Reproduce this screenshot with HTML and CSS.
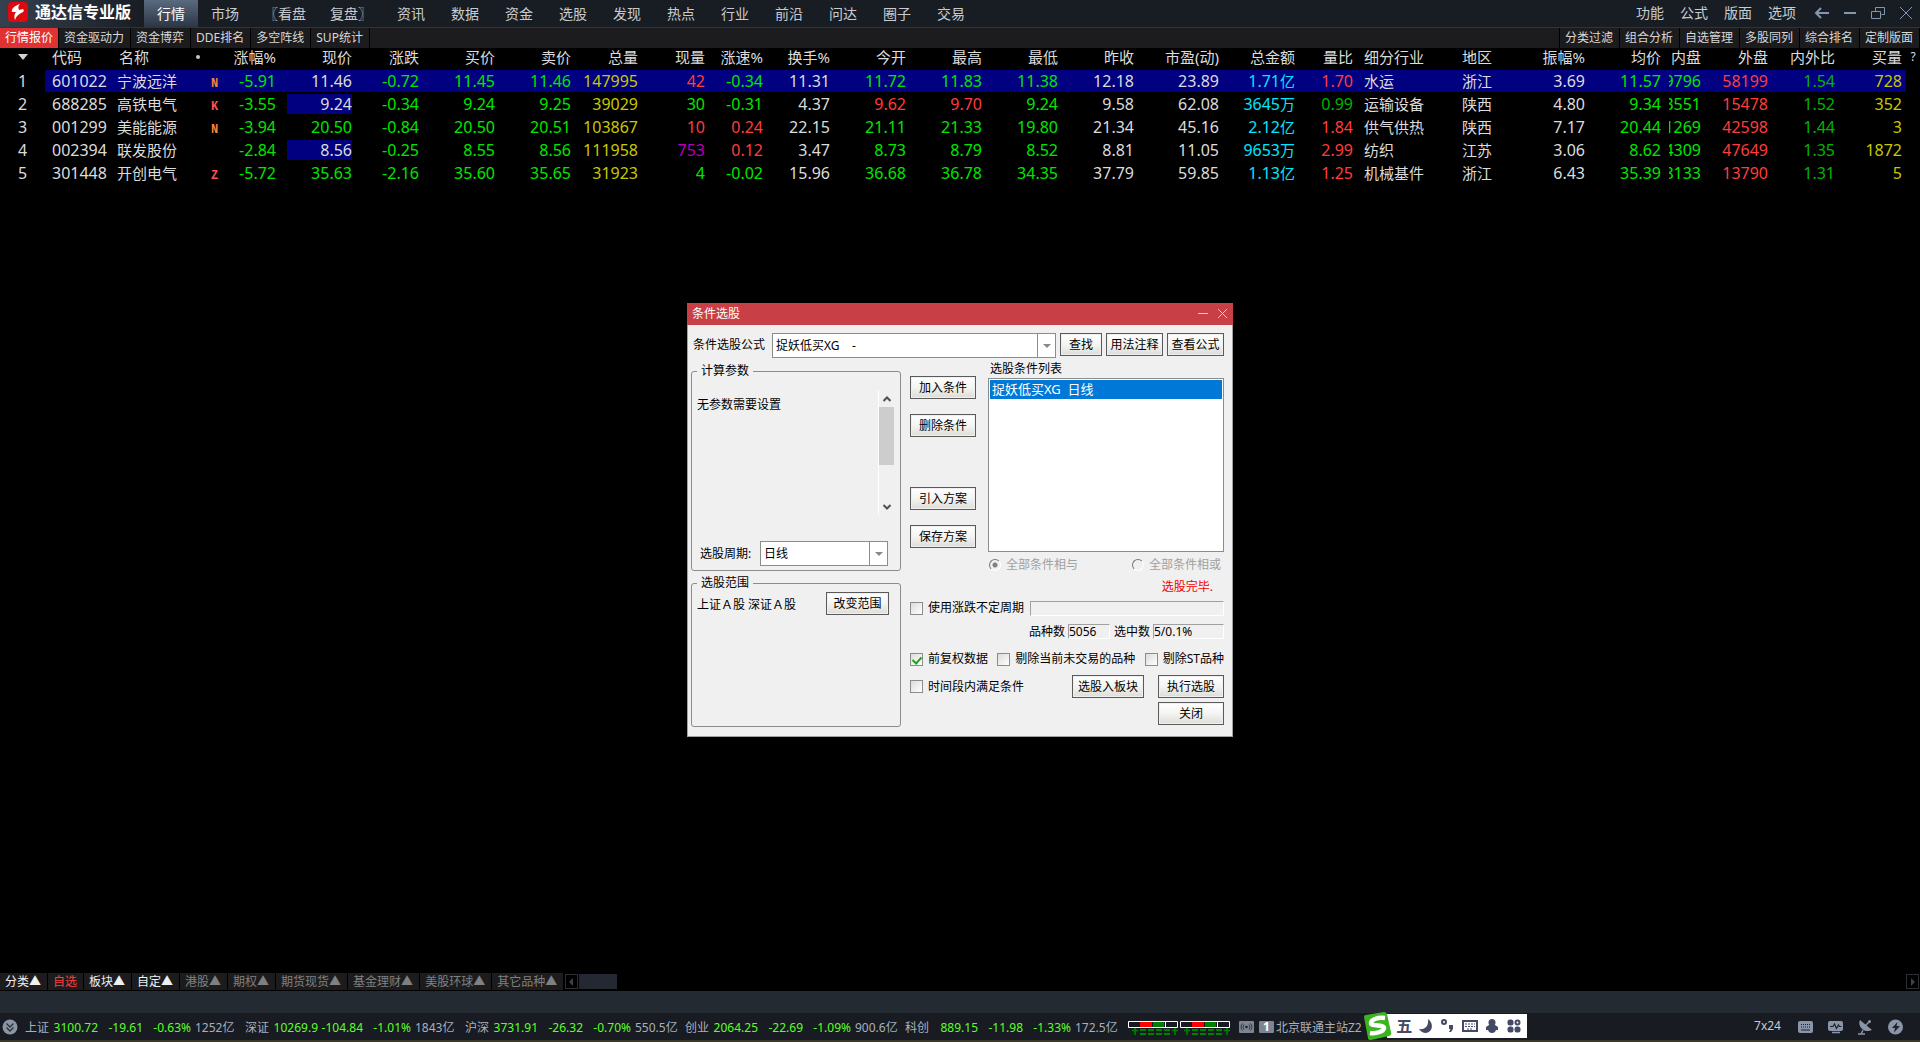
FILE: index.html
```html
<!DOCTYPE html>
<html lang="zh-CN">
<head>
  <meta charset="UTF-8">
  <meta name="viewport" content="width=device-width, initial-scale=1.0">
  <title>通达信专业版</title>
  <link rel="stylesheet" href="styles.css">
</head>
<body>
  <!-- Top menu -->
  <header class="topbar">
    <div class="brand">
      <svg width="20" height="20" viewBox="0 0 20 20">
        <rect width="20" height="20" rx="4" fill="#dc0a0f"/>
        <path d="M12 2 C6 4 3 7 4 10 L8 10 C6 12 6 15 7 18 C8 14 11 12 15 10 C16 9 16 8 15 7 L11 8 C10 6 10 4 12 2Z" fill="#fff"/>
      </svg>
      <span>通达信专业版</span>
    </div>
    <nav class="menu">
      <a href="#" class="active">行情</a>
      <a href="#">市场</a>
      <a href="#" class="wide">〖看盘</a>
      <a href="#" class="wide">复盘〗</a>
      <a href="#">资讯</a>
      <a href="#">数据</a>
      <a href="#">资金</a>
      <a href="#">选股</a>
      <a href="#">发现</a>
      <a href="#">热点</a>
      <a href="#">行业</a>
      <a href="#">前沿</a>
      <a href="#">问达</a>
      <a href="#">圈子</a>
      <a href="#">交易</a>
    </nav>
    <nav class="menu tools">
      <a href="#">功能</a>
      <a href="#">公式</a>
      <a href="#">版面</a>
      <a href="#">选项</a>
    </nav>
    <div class="window-buttons">
      <button type="button" aria-label="返回"><svg width="16" height="14" viewBox="0 0 16 14"><path d="M15 7H2M7 2L2 7l5 5"/></svg></button>
      <button type="button" aria-label="最小化"><svg width="16" height="14" viewBox="0 0 16 14"><path d="M2 7h12"/></svg></button>
      <button type="button" aria-label="还原"><svg width="16" height="14" viewBox="0 0 16 14"><path class="thin" d="M5.5 5V1.5h9v7h-3M1.5 5.5h9v7h-9z"/></svg></button>
      <button type="button" aria-label="关闭窗口"><svg width="16" height="14" viewBox="0 0 16 14"><path class="thin" d="M2 1l12 12M14 1L2 13"/></svg></button>
    </div>
  </header>

  <nav class="tabs">
    <a href="#" class="active">行情报价</a>
    <a href="#">资金驱动力</a>
    <a href="#">资金博弈</a>
    <a href="#">DDE排名</a>
    <a href="#">多空阵线</a>
    <a href="#">SUP统计</a>
    <span class="spacer"></span>
    <a href="#">分类过滤</a>
    <a href="#">组合分析</a>
    <a href="#">自选管理</a>
    <a href="#">多股同列</a>
    <a href="#">综合排名</a>
    <a href="#">定制版面</a>
  </nav>

  <!-- Quotes -->
  <main class="quotes">
    <table>
      <colgroup>
        <col width="45"><col width="69"><col width="94"><col width="14"><col width="54">
        <col width="76"><col width="67"><col width="76"><col width="76"><col width="67">
        <col width="67"><col width="58"><col width="67"><col width="76"><col width="76">
        <col width="76"><col width="76"><col width="85"><col width="76"><col width="58">
        <col width="102"><col width="63"><col width="67"><col width="76"><col width="40">
        <col width="67"><col width="67"><col width="67"><col width="4"><col width="14">
      </colgroup>
      <thead>
        <tr>
          <th class="idx"><svg width="10" height="6" viewBox="0 0 10 6"><path d="M0 0h10L5 6z" fill="#d2d2d2"/></svg></th>
          <th class="code">代码</th><th class="name"><div class="name-head">名称<i></i></div></th><th></th><th>涨幅%</th>
          <th>现价</th><th>涨跌</th><th>买价</th><th>卖价</th><th>总量</th>
          <th>现量</th><th>涨速%</th><th>换手%</th><th>今开</th><th>最高</th>
          <th>最低</th><th>昨收</th><th>市盈(动)</th><th>总金额</th><th>量比</th>
          <th class="trade">细分行业</th><th class="area">地区</th><th>振幅%</th><th>均价</th><th>内盘</th>
          <th>外盘</th><th>内外比</th><th>买量</th><th></th><th class="help">?</th>
        </tr>
      </thead>
      <tbody>
        <tr class="selected">
          <td class="idx">1</td><td class="code">601022</td><td class="name">宁波远洋</td><td class="flag orange">N</td><td class="down">-5.91</td>
          <td>11.46</td><td class="down">-0.72</td><td class="down">11.45</td><td class="down">11.46</td><td class="vol">147995</td>
          <td class="up">42</td><td class="down">-0.34</td><td>11.31</td><td class="down">11.72</td><td class="down">11.83</td>
          <td class="down">11.38</td><td>12.18</td><td>23.89</td><td class="money">1.71<small>亿</small></td><td class="up">1.70</td>
          <td class="trade">水运</td><td class="area">浙江</td><td>3.69</td><td class="down">11.57</td><td class="down"><div class="clip">9796</div></td>
          <td class="up">58199</td><td class="dim">1.54</td><td class="vol">728</td><td></td><td class="end"></td>
        </tr>
        <tr>
          <td class="idx">2</td><td class="code">688285</td><td class="name">高铁电气</td><td class="flag red">K</td><td class="down">-3.55</td>
          <td><div class="flash">9.24</div></td><td class="down">-0.34</td><td class="down">9.24</td><td class="down">9.25</td><td class="vol">39029</td>
          <td class="down">30</td><td class="down">-0.31</td><td>4.37</td><td class="up">9.62</td><td class="up">9.70</td>
          <td class="down">9.24</td><td>9.58</td><td>62.08</td><td class="money">3645<small>万</small></td><td class="dim">0.99</td>
          <td class="trade">运输设备</td><td class="area">陕西</td><td>4.80</td><td class="down">9.34</td><td class="down"><div class="clip">3551</div></td>
          <td class="up">15478</td><td class="dim">1.52</td><td class="vol">352</td><td></td><td class="end"></td>
        </tr>
        <tr>
          <td class="idx">3</td><td class="code">001299</td><td class="name">美能能源</td><td class="flag orange">N</td><td class="down">-3.94</td>
          <td class="down">20.50</td><td class="down">-0.84</td><td class="down">20.50</td><td class="down">20.51</td><td class="vol">103867</td>
          <td class="up">10</td><td class="up">0.24</td><td>22.15</td><td class="down">21.11</td><td class="down">21.33</td>
          <td class="down">19.80</td><td>21.34</td><td>45.16</td><td class="money">2.12<small>亿</small></td><td class="up">1.84</td>
          <td class="trade">供气供热</td><td class="area">陕西</td><td>7.17</td><td class="down">20.44</td><td class="down"><div class="clip">1269</div></td>
          <td class="up">42598</td><td class="dim">1.44</td><td class="vol">3</td><td></td><td class="end"></td>
        </tr>
        <tr>
          <td class="idx">4</td><td class="code">002394</td><td class="name">联发股份</td><td></td><td class="down">-2.84</td>
          <td><div class="flash">8.56</div></td><td class="down">-0.25</td><td class="down">8.55</td><td class="down">8.56</td><td class="vol">111958</td>
          <td class="big">753</td><td class="up">0.12</td><td>3.47</td><td class="down">8.73</td><td class="down">8.79</td>
          <td class="down">8.52</td><td>8.81</td><td>11.05</td><td class="money">9653<small>万</small></td><td class="up">2.99</td>
          <td class="trade">纺织</td><td class="area">江苏</td><td>3.06</td><td class="down">8.62</td><td class="down"><div class="clip">4309</div></td>
          <td class="up">47649</td><td class="dim">1.35</td><td class="vol">1872</td><td></td><td class="end"></td>
        </tr>
        <tr>
          <td class="idx">5</td><td class="code">301448</td><td class="name">开创电气</td><td class="flag red">Z</td><td class="down">-5.72</td>
          <td class="down">35.63</td><td class="down">-2.16</td><td class="down">35.60</td><td class="down">35.65</td><td class="vol">31923</td>
          <td class="down">4</td><td class="down">-0.02</td><td>15.96</td><td class="down">36.68</td><td class="down">36.78</td>
          <td class="down">34.35</td><td>37.79</td><td>59.85</td><td class="money">1.13<small>亿</small></td><td class="up">1.25</td>
          <td class="trade">机械基件</td><td class="area">浙江</td><td>6.43</td><td class="down">35.39</td><td class="down"><div class="clip">8133</div></td>
          <td class="up">13790</td><td class="dim">1.31</td><td class="vol">5</td><td></td><td class="end"></td>
        </tr>
      </tbody>
    </table>
  </main>

  <!-- Stock filter dialog -->
  <section class="dialog" role="dialog" aria-labelledby="dialog-title">
    <div class="dialog-title">
      <span id="dialog-title">条件选股</span>
      <svg width="30" height="10" viewBox="0 0 30 10"><path d="M0 4.5h10M20 0l9 9M29 0l-9 9"/></svg>
    </div>
    <div class="dialog-body">
      <div class="formula-row">
        <label for="formula">条件选股公式</label>
        <div class="combo formula">
          <select id="formula"><option>捉妖低买XG &nbsp;&nbsp; -</option></select>
        </div>
        <button type="button" class="btn find">查找</button>
        <button type="button" class="btn usage">用法注释</button>
        <button type="button" class="btn usage">查看公式</button>
      </div>

      <div class="columns">
        <div class="left">
          <fieldset>
            <legend>计算参数</legend>
            <div class="params">
              <span>无参数需要设置</span>
              <div class="scrollbar">
                <svg width="8" height="6" viewBox="0 0 8 6"><path d="M0.5 5L4 1.5L7.5 5"/></svg>
                <div class="thumb"></div>
                <svg width="8" height="6" viewBox="0 0 8 6"><path d="M0.5 1L4 4.5L7.5 1"/></svg>
              </div>
            </div>
            <div class="period">
              <label for="period">选股周期:</label>
              <div class="combo">
                <select id="period"><option>日线</option></select>
              </div>
            </div>
          </fieldset>
          <fieldset class="range">
            <legend>选股范围</legend>
            <div class="range-row">
              <span>上证Ａ股 深证Ａ股</span>
              <button type="button" class="btn">改变范围</button>
            </div>
          </fieldset>
        </div>

        <div class="right">
          <div class="pick">
            <div class="actions">
              <button type="button" class="btn">加入条件</button>
              <button type="button" class="btn">删除条件</button>
              <button type="button" class="btn scheme">引入方案</button>
              <button type="button" class="btn">保存方案</button>
            </div>
            <div class="list">
              <span id="list-label">选股条件列表</span>
              <ul role="listbox" aria-labelledby="list-label">
                <li role="option" aria-selected="true">捉妖低买XG&nbsp; 日线</li>
              </ul>
            </div>
          </div>
          <div class="radios">
            <label><input type="radio" name="logic" checked disabled>全部条件相与</label>
            <label><input type="radio" name="logic" disabled>全部条件相或</label>
          </div>
          <div class="done">选股完毕.</div>
          <div class="cycle">
            <label><input type="checkbox">使用涨跌不定周期</label>
            <div class="sunken"></div>
          </div>
          <div class="stats">
            <span>品种数</span><div class="sunken total">5056</div>
            <span>选中数</span><div class="sunken hits">5/0.1%</div>
          </div>
          <div class="checks">
            <label><input type="checkbox" checked>前复权数据</label>
            <label><input type="checkbox">剔除当前未交易的品种</label>
            <label><input type="checkbox">剔除ST品种</label>
          </div>
          <div class="run">
            <label><input type="checkbox">时间段内满足条件</label>
            <button type="button" class="btn block">选股入板块</button>
            <button type="button" class="btn">执行选股</button>
          </div>
          <div class="close">
            <button type="button" class="btn">关闭</button>
          </div>
        </div>
      </div>
    </div>
  </section>

  <!-- Bottom tabs -->
  <nav class="sheets">
    <a href="#">分类▲</a>
    <a href="#" class="active">自选</a>
    <a href="#">板块▲</a>
    <a href="#">自定▲</a>
    <a href="#" class="off">港股▲</a>
    <a href="#" class="off">期权▲</a>
    <a href="#" class="off">期货现货▲</a>
    <a href="#" class="off">基金理财▲</a>
    <a href="#" class="off">美股环球▲</a>
    <a href="#" class="off">其它品种▲</a>
    <button type="button" class="arrow" aria-label="向左"><svg width="5" height="8" viewBox="0 0 5 8"><path d="M4 0v8L0 4z"/></svg></button>
    <span class="track"></span>
    <span class="spacer"></span>
    <button type="button" class="arrow" aria-label="向右"><svg width="5" height="8" viewBox="0 0 5 8"><path d="M1 0v8l4-4z"/></svg></button>
  </nav>
  <div class="band"></div>

  <!-- Status bar -->
  <footer class="status">
    <svg class="round" width="16" height="16" viewBox="0 0 16 16">
      <circle cx="8" cy="8" r="7.5" fill="#8a95a5"/>
      <path d="M4.5 4.5L8 8l3.5-3.5M4.5 8.5L8 12l3.5-3.5" fill="none" stroke="#2a303a" stroke-width="1.3"/>
    </svg>
    <div class="index"><span>上证</span><b>3100.72</b><b>-19.61</b><b>-0.63%</b><span>1252亿</span></div>
    <div class="index"><span>深证</span><b>10269.9</b><b>-104.84</b><b>-1.01%</b><span>1843亿</span></div>
    <div class="index"><span>沪深</span><b>3731.91</b><b>-26.32</b><b>-0.70%</b><span>550.5亿</span></div>
    <div class="index"><span>创业</span><b>2064.25</b><b>-22.69</b><b>-1.09%</b><span>900.6亿</span></div>
    <div class="index"><span>科创</span><b>889.15</b><b>-11.98</b><b>-1.33%</b><span>172.5亿</span></div>
    <svg class="meter" width="102" height="14" viewBox="0 0 102 14">
      <defs>
        <g id="meter">
          <path d="M12 1h12v5H12z" fill="#f00"/>
          <path d="M25 1h11v5H25z" fill="#008000"/>
          <path d="M.5.5h49v6H.5zM37.5 1v5" fill="none" stroke="#fff"/>
          <path d="M7 7v7M4 9.500h6M47 7v7M44 9.500h6" fill="none" stroke="#008000" stroke-width="1.6"/>
          <path d="M12 9h6M20 9h6M28 9h6M36 9h6M12 13h6M20 13h6M28 13h6M36 13h6" stroke="#008000" stroke-width="2"/>
        </g>
      </defs>
      <use href="#meter"/><use href="#meter" x="52"/>
    </svg>
    <svg class="cast" width="15" height="12" viewBox="0 0 15 12">
      <rect width="15" height="12" rx="1" fill="#7c8591"/>
      <circle cx="7.5" cy="6" r="1.3" fill="#1d222a"/>
      <path d="M5 3.500a4 4 0 000 5M10 3.500a4 4 0 010 5M3.500 2.500a5 5 0 000 7M11.500 2.500a5 5 0 010 7" fill="none" stroke="#1d222a" stroke-width="0.8"/>
    </svg>
    <span class="num">1</span>
    <span class="host">北京联通主站Z2</span>
    <span class="spacer"></span>
    <span class="hours">7x24</span>
    <div class="tray">
      <svg width="16" height="16" viewBox="0 0 16 16">
        <rect x="0" y="2" width="15" height="12" rx="2" fill="#8a95a7"/>
        <path d="M3 5.5h10M3 8h10" stroke="#1d222c" stroke-dasharray="1 1"/><path d="M3 11h9" stroke="#1d222c"/>
      </svg>
      <svg width="16" height="16" viewBox="0 0 16 16">
        <rect x="0" y="2" width="15" height="10" rx="2" fill="#8a95a7"/>
        <path d="M4 13.5h8" stroke="#8a95a7" stroke-width="1.5"/>
        <path d="M2 7.5h3L6.5 5l2 4.5L10.5 6l1 1.5h2" fill="none" stroke="#1d222c" stroke-width="1.2"/>
      </svg>
      <svg width="16" height="16" viewBox="0 0 16 16">
        <path d="M2 1C-1 7 6 15 14 11z" fill="#8a95a7"/>
        <path d="M7 7l4-4M0 15h7M3 15l2-4" stroke="#8a95a7" stroke-width="1.5"/>
        <circle cx="11.5" cy="2.5" r="1.5" fill="#8a95a7"/>
      </svg>
      <svg width="16" height="16" viewBox="0 0 16 16">
        <circle cx="7.5" cy="8" r="7.5" fill="#8a95a7"/>
        <path d="M9.5 3L4 9h3l-1 4.5L12 7H8.5z" fill="#1d222c"/>
      </svg>
    </div>

    <!-- Input method bar floats over the status line -->
    <div class="ime">
      <svg class="ime-logo" width="30" height="30" viewBox="0 0 30 30">
        <path d="M1 6Q1 4 3 4L21 1Q23 1 24 3L28 21Q29 24 26 25L8 29Q5 29 5 27z" fill="#3cb420"/>
        <path d="M22 7C14 6 8 9 8 12C8 16 21 13 21 17C21 20 14 23 7 22" fill="none" stroke="#fff" stroke-width="4.5"/>
      </svg>
      <span>五</span>
      <svg width="16" height="16" viewBox="0 0 16 16"><path d="M10 1C16 5 15 14 8 15C5 15 2 13 1 11C7 12 11 8 10 1z"/></svg>
      <svg width="16" height="16" viewBox="0 0 16 16"><circle cx="4" cy="4" r="2" class="line"/><path d="M9 7h4v4l-2 3h-2l1.5-3H9z"/></svg>
      <svg width="16" height="16" viewBox="0 0 16 16"><rect x="1" y="3" width="14" height="10" class="line"/><path d="M3 6h10M3 8.5h10" class="line dots"/><path d="M5 11h6" class="line dots"/></svg>
      <svg width="16" height="16" viewBox="0 0 16 16"><circle cx="8" cy="4.5" r="3.5"/><path d="M5 7h6l3 2v3h-2q-1 3-4 3t-4-3H2V9z"/></svg>
      <svg width="16" height="16" viewBox="0 0 16 16"><rect x="1.5" y="1.5" width="6" height="6" rx="2.5"/><rect x="9.500" y="2.500" width="4" height="4" rx="2" class="line"/><rect x="1.5" y="8.5" width="6" height="6" rx="2.5"/><rect x="8.5" y="8.5" width="6" height="6" rx="2.5"/></svg>
    </div>
  </footer>
</body>
</html>
```
FILE: styles.css
```css
* {
  box-sizing: border-box;
}
body {
  margin: 0;
  min-height: 100vh;
  display: flex;
  flex-direction: column;
  position: relative;
  background: #000;
  color: #dcdcdc;
  font-family: "Noto Sans", "Noto Sans CJK SC", sans-serif;
  font-size: 12px;
  line-height: 16px;
  white-space: nowrap;
}
a {
  color: inherit;
  text-decoration: none;
}
button, select, input {
  font: inherit;
  margin: 0;
}
svg {
  display: block;
  flex: none;
}
.spacer {
  flex: 1;
}

/* Top menu */
.topbar {
  display: flex;
  height: 28px;
  background: #181d24;
  border-bottom: 1px solid #2c3440;
}
.brand {
  display: flex;
  align-items: center;
  gap: 7px;
  width: 144px;
  padding: 0 0 3px 8px;
  background: linear-gradient(90deg, #36404e, #181d24);
  color: #fff;
  font-size: 16px;
  font-weight: bold;
}
.menu {
  display: flex;
  flex: 1;
  font-size: 14px;
  line-height: 27px;
  color: #c8ccd0;
}
.menu a {
  width: 54px;
  text-align: center;
}
.menu .wide {
  width: 66px;
}
.menu .active {
  background: linear-gradient(#5a6a80, #2c3644);
  color: #fff;
}
.menu.tools {
  flex: none;
  line-height: 26px;
}
.tools a {
  width: 44px;
}
.window-buttons {
  display: flex;
  align-items: center;
  gap: 12px;
  padding: 0 6px 1px 10px;
}
.window-buttons button {
  padding: 0;
  border: 0;
  background: none;
}
.window-buttons path {
  fill: none;
  stroke: #8296b0;
  stroke-width: 2;
}
.window-buttons .thin {
  stroke-width: 1;
}

/* Function tabs */
.tabs {
  display: flex;
  height: 20px;
  background: #1c1c1e;
  line-height: 20px;
  color: #d8d8d8;
}
.tabs a {
  padding: 0 6px 0 5px;
  border-right: 1px solid #000;
}
.tabs .active {
  padding-right: 5px;
  background: #e03232;
  color: #fff;
}
.tabs .spacer {
  border-right: 1px solid #000;
}

/* Quotes */
.quotes {
  flex: 1;
}
table {
  width: 100%;
  table-layout: fixed;
  border-collapse: separate;
  border-spacing: 0;
}
th, td {
  padding: 0;
  height: 23px;
  text-align: right;
  font-size: 16px;
  font-weight: normal;
  line-height: 20px;
}
th {
  height: 22px;
  padding-bottom: 4px;
  font-size: 15px;
  line-height: 18px;
}
td {
  border-bottom: 1px solid #000;
}
th.idx, td.idx {
  text-align: center;
}
.idx svg {
  margin: 0 auto;
}
th.code, th.name, th.trade, th.area, td.code, td.name, td.trade, td.area {
  text-align: left;
}
th.code, td.code {
  padding-left: 7px;
}
td.name, td.trade, td.area {
  font-size: 15px;
}
td.name {
  padding-left: 3px;
}
th.name {
  padding-left: 5px;
}
.name-head {
  display: flex;
  align-items: center;
  justify-content: space-between;
  padding-right: 8px;
}
.name-head i {
  width: 4px;
  height: 4px;
  border-radius: 2px;
  background: #c8c8c8;
}
th.trade, td.trade {
  padding-left: 11px;
}
th.area, td.area {
  padding-left: 7px;
}
th.help {
  text-align: center;
  font-size: 12px;
}
td.flag {
  padding: 6px 0 0 3px;
  text-align: left;
  font-family: "Liberation Mono", monospace;
  font-size: 12px;
  font-weight: bold;
  line-height: 16px;
}
.orange { color: #ff8040; }
.red { color: #ff5050; }
.up { color: #ff3c3c; }
.down { color: #00e600; }
.dim { color: #00b400; }
.vol { color: #c8c800; }
.big { color: #b400b4; }
.money { color: #00e6ff; }
.money small {
  font-size: 15px;
  line-height: 16px;
}
.selected td {
  background: #000080;
}
.selected td.idx, .selected td.end {
  background: none;
}
.flash {
  width: 65px;
  height: 20px;
  margin-left: auto;
  background: #000080;
}
.clip {
  display: flex;
  justify-content: flex-end;
  margin-left: 8px;
  overflow: hidden;
}

/* Dialog */
.dialog {
  position: absolute;
  top: 303px;
  left: 50%;
  width: 546px;
  margin-left: -273px;
  background: #f0f0f0;
  color: #000;
}
.dialog-title {
  display: flex;
  align-items: center;
  justify-content: space-between;
  height: 22px;
  padding: 0 5px;
  background: #c84046;
  color: #fff;
}
.dialog-title path {
  fill: none;
  stroke: #f0c8ca;
}
.dialog-body {
  padding: 8px 8px 9px 3px;
  border: 1px solid #a0a0a0;
  border-top: 0;
}
.btn {
  width: 66px;
  height: 23px;
  padding: 0;
  border: 1px solid #5a5a5a;
  background: linear-gradient(#fff, #f4f4f2 50%, #dddcd6);
  box-shadow: inset 0 0 0 1px #f0f0f0;
  color: #000;
  line-height: 19px;
}
.formula-row {
  display: flex;
  align-items: flex-start;
  gap: 4px;
  margin-bottom: 2px;
}
.formula-row label {
  width: 77px;
  padding-left: 2px;
  line-height: 24px;
}
.find {
  width: 42px;
}
.usage {
  width: 57px;
}
.combo {
  position: relative;
  width: 128px;
  height: 25px;
}
.combo.formula {
  flex: 1;
}
.combo select {
  width: 100%;
  height: 100%;
  padding: 0 22px 0 3px;
  border: 1px solid #8c8c8c;
  border-radius: 0;
  background: #fff;
  color: #000;
  appearance: none;
}
/* arrow and its divider */
.combo::before {
  content: "";
  position: absolute;
  top: 1px;
  right: 18px;
  bottom: 1px;
  border-left: 1px solid #8c8c8c;
}
.combo::after {
  content: "";
  position: absolute;
  top: 11px;
  right: 5px;
  border: 4px solid transparent;
  border-top-color: #888;
  border-bottom: 0;
}
.columns {
  display: flex;
  gap: 9px;
}
.left {
  width: 210px;
  padding-top: 3px;
}
fieldset {
  min-width: 0;
  margin: 0 0 4px;
  padding: 0 0 4px;
  border: 1px solid #8c8c8c;
  border-radius: 3px;
}
fieldset.range {
  height: 152px;
  margin: 0;
}
legend {
  margin-left: 5px;
  padding: 0 4px;
}
.params {
  display: flex;
  justify-content: space-between;
  height: 125px;
  margin-top: 11px;
  padding: 0 6px 0 5px;
}
.params span {
  padding-top: 7px;
}
.scrollbar {
  display: flex;
  flex-direction: column;
  align-items: center;
  width: 16px;
  padding: 6px 0 5px;
  border-left: 1px solid #fff;
}
.scrollbar path {
  fill: none;
  stroke: #505050;
  stroke-width: 2;
}
.thumb {
  width: 15px;
  height: 58px;
  margin: 5px 0 auto;
  background: #cdcdcd;
}
.period {
  display: flex;
  align-items: center;
  justify-content: space-between;
  margin-top: 26px;
  padding: 0 12px 0 8px;
}
.range-row {
  display: flex;
  align-items: flex-end;
  justify-content: space-between;
  padding: 1px 11px 0 5px;
  line-height: 20px;
}
.range-row .btn {
  width: 63px;
}
.right {
  flex: 1;
}
.pick {
  display: flex;
  gap: 12px;
}
.actions {
  display: flex;
  flex-direction: column;
  gap: 15px;
  padding-top: 16px;
}
.actions .scheme {
  margin-top: 35px;
}
.list {
  flex: 1;
  line-height: 18px;
}
.list span {
  display: block;
  padding-left: 2px;
}
.list ul {
  height: 174px;
  margin: 0;
  padding: 1px;
  border: 1px solid #8c8c8c;
  background: #fff;
  list-style: none;
}
.list li {
  padding-left: 2px;
  background: #0078d7;
  color: #fff;
  font-size: 13px;
  line-height: 19px;
}
.right label {
  display: flex;
  align-items: center;
  gap: 5px;
}
.radios {
  display: flex;
  justify-content: space-between;
  margin: 5px 3px 0 79px;
  color: #a0a0a0;
}
.radios input {
  width: 12px;
  height: 12px;
  border: 1px solid #fff;
  border-top-color: #777;
  border-left-color: #777;
  border-radius: 6px;
  appearance: none;
}
.radios input:checked {
  background: radial-gradient(#808080 2px, transparent 3px);
}
.done {
  margin-top: 6px;
  padding-right: 11px;
  text-align: right;
  color: #f00000;
}
input[type="checkbox"] {
  width: 13px;
  height: 13px;
  border: 1px solid #8c8c8c;
  background: linear-gradient(135deg, #dcdcd7, #fff);
  appearance: none;
}
/* green tick */
input[type="checkbox"]:checked::before {
  content: "";
  display: block;
  width: 4px;
  height: 7px;
  margin: 1px 0 0 3px;
  border: solid #21a121;
  border-width: 0 2px 2px 0;
  transform: rotate(42deg);
}
.sunken {
  height: 15px;
  border: 1px solid #fff;
  border-top-color: #a0a0a0;
  border-left-color: #a0a0a0;
  line-height: 14px;
}
.cycle {
  display: flex;
  align-items: center;
  gap: 6px;
  margin-top: 5px;
}
.cycle .sunken {
  flex: 1;
}
.stats {
  display: flex;
  justify-content: flex-end;
  gap: 3px;
  margin-top: 8px;
}
.total {
  width: 42px;
  margin-right: 1px;
}
.hits {
  width: 71px;
}
.checks {
  display: flex;
  justify-content: space-between;
  margin-top: 11px;
}
.run {
  display: flex;
  align-items: center;
  gap: 14px;
  margin-top: 8px;
}
.run .block {
  width: 72px;
  margin-left: auto;
}
.close {
  margin-top: 4px;
}
.close .btn {
  display: block;
  margin-left: auto;
}

/* Bottom tabs */
.sheets {
  display: flex;
  height: 18px;
  color: #f0f0f0;
  line-height: 17px;
}
.sheets a {
  height: 17px;
  padding: 0 6px 0 5px;
  border-right: 1px solid #000;
  background: #1c1c1e;
}
.sheets .active {
  color: #ff3c3c;
}
.sheets .off {
  color: #808080;
}
.arrow {
  display: flex;
  align-items: center;
  justify-content: center;
  width: 13px;
  height: 15px;
  margin: 1px 1px 0;
  padding: 0;
  border: 1px solid #2c3036;
  background: none;
}
.arrow path {
  fill: #3c424a;
}
.track {
  width: 38px;
  height: 15px;
  margin-top: 1px;
  background: #232832;
}
.band {
  height: 22px;
  background: #232a31;
}

/* Status bar */
.status {
  display: flex;
  align-items: center;
  position: relative;
  height: 29px;
  border-bottom: 2px solid #3a3828;
  background: #181b22;
  color: #a8b0bc;
}
.round {
  margin: 0 7px 0 2px;
}
.index {
  display: grid;
  grid-template-columns: 26px 47px 45px 48px 50px;
  width: 220px;
  padding-top: 2px;
}
.index b {
  font-weight: normal;
  text-align: right;
  color: #5cff28;
}
.index span:last-child {
  padding-left: 4px;
}
.meter {
  margin: 3px 9px 0 3px;
}
.num {
  width: 15px;
  margin: 0 2px 0 5px;
  border-radius: 1px;
  background: #7c8591;
  color: #fff;
  font-weight: bold;
  line-height: 12px;
  text-align: center;
}
.host {
  padding-top: 2px;
}
.hours {
  margin-right: 17px;
  padding-bottom: 2px;
  color: #c8ccd2;
}
.tray {
  display: flex;
  gap: 14px;
  margin-right: 16px;
}
.ime {
  display: flex;
  align-items: center;
  gap: 6px;
  position: absolute;
  left: 71%;
  top: 1px;
  width: 164px;
  height: 24px;
  background: linear-gradient(90deg, transparent 24px, #fff 24px);
  color: #444a66;
  font-size: 16px;
  font-weight: bold;
}
.ime svg {
  fill: #444a66;
}
.ime .ime-logo {
  margin-right: -3px;
}
.ime .line {
  fill: none;
  stroke: #444a66;
  stroke-width: 2;
}
.ime .dots {
  stroke-width: 1;
  stroke-dasharray: 2 1;
}
```
